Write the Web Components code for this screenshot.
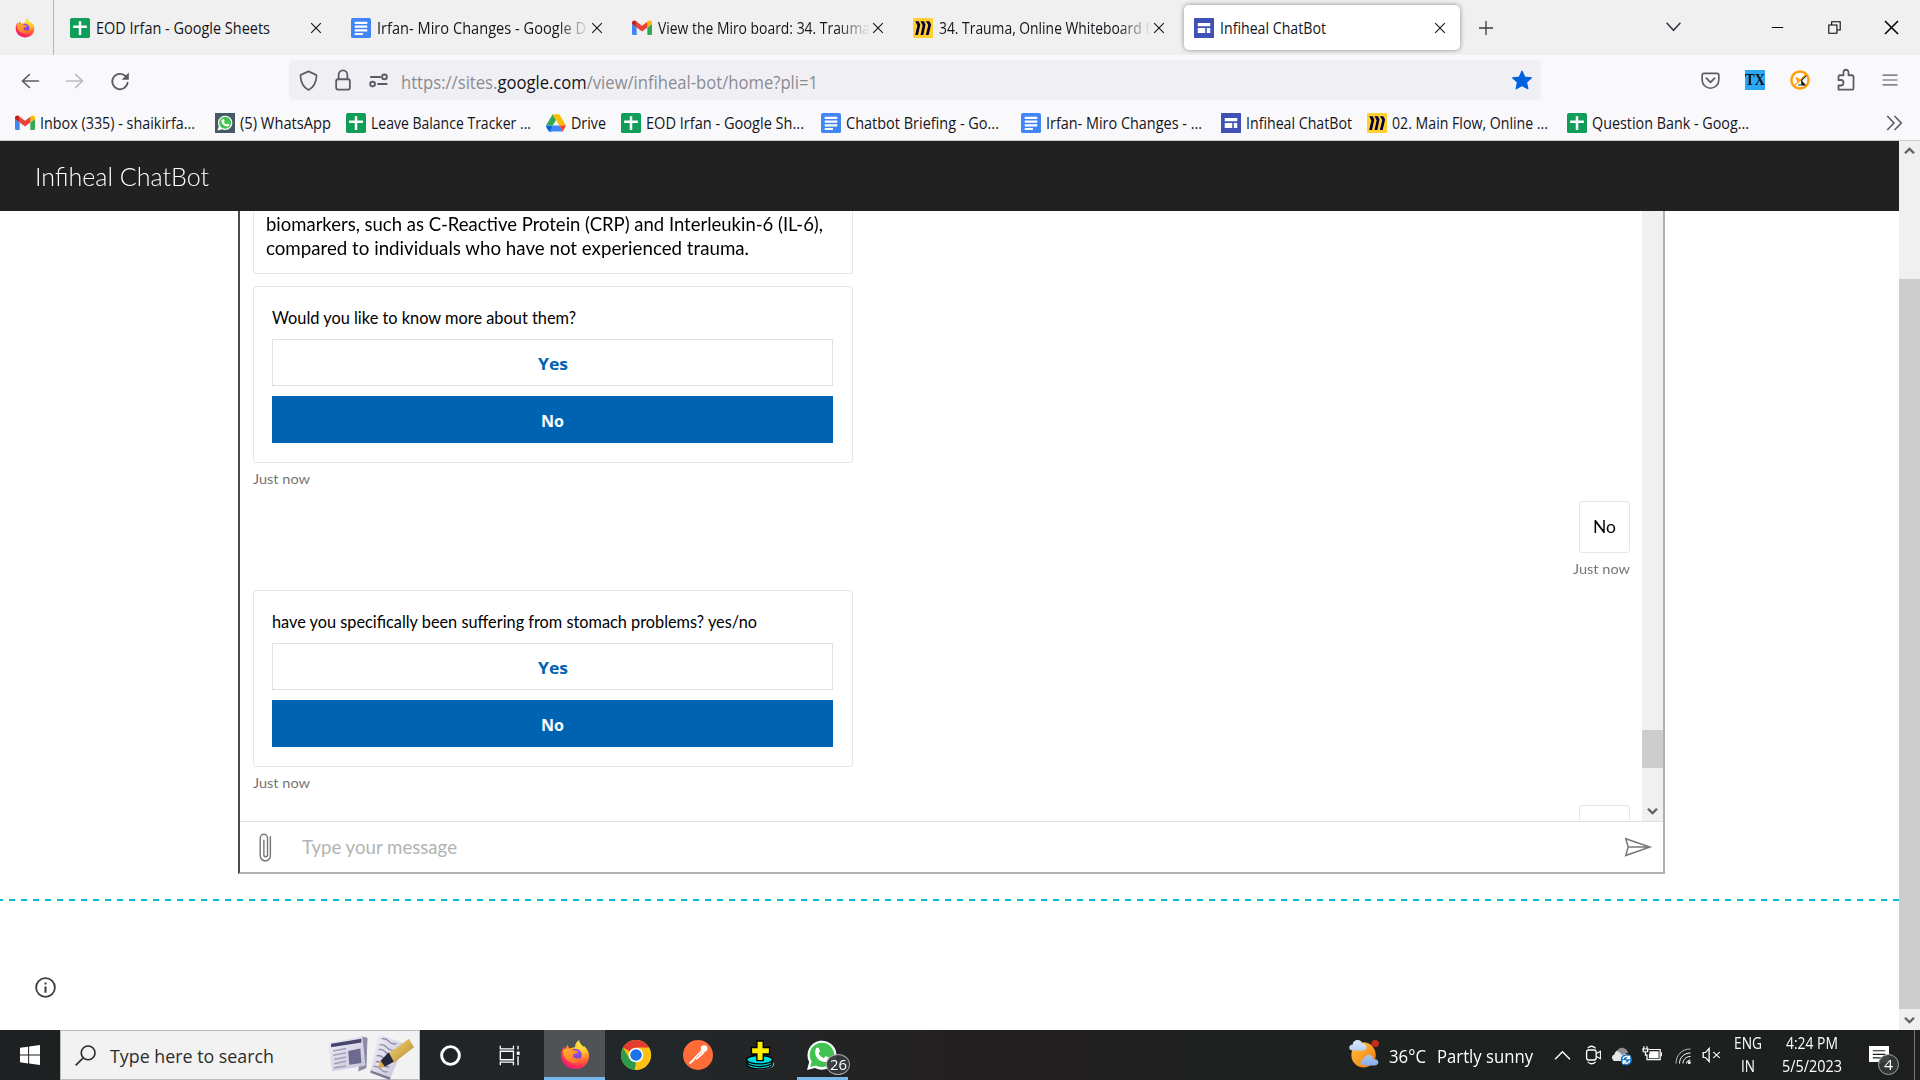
<!DOCTYPE html>
<html lang="en">
<head>
<meta charset="utf-8">
<title>Infiheal ChatBot</title>
<style>
html,body{margin:0;height:100%;overflow:hidden;background:#fff}
body{font-family:"Open Sans","Noto Sans",sans-serif;color:#15141a}
</style>
</head>
<body>
<desktop-screen></desktop-screen>
<script>
const ICONS = {
firefox:`<defs><radialGradient id="a" cx=".75" cy=".1" r="1"><stop offset="0" stop-color="#fff44f"/><stop offset=".35" stop-color="#ffc02a"/><stop offset=".6" stop-color="#ff6a33"/><stop offset=".85" stop-color="#ff2b55"/><stop offset="1" stop-color="#e31587"/></radialGradient><radialGradient id="b" cx=".6" cy=".3" r=".8"><stop offset="0" stop-color="#a05af0"/><stop offset="1" stop-color="#5b2fc4"/></radialGradient><linearGradient id="c" x1="0" y1="0" x2="1" y2="1"><stop offset="0" stop-color="#ffb62c"/><stop offset="1" stop-color="#ff6333"/></linearGradient></defs><path fill="url(#a)" d="M16 31C7.500 31 1 24.500 1 16.500 1 12.500 2.800 9 4.500 7L5 10 8 5 10 9 16 7.500C16 4 18 1.500 20.500 0 20.500 3 22 4.500 24 6 25 7 25.500 8 25.500 6.500 29 9 31 13 31 17 31 25 24.500 31 16 31Z"/><circle cx="16.300" cy="16" r="6.800" fill="url(#b)"/><path fill="url(#c)" d="M3 11C6 8 12 9 14.500 11L19.500 12C19 14 16 14.500 15 15 13 16.500 14 19 16.500 19.500 19 20 21 19 23 20 21 24 17 25.500 12 24 6 22 3 17 3 11Z"/>`,
sheets:`<rect x="0" y="0" width="32" height="32" rx="3" fill="#0f9d58"/><path fill="#fff" d="M14 5h4v7h9v4h-9v11h-4V16H5v-4h9z"/>`,
docs:`<rect width="32" height="32" rx="3" fill="#4285f4"/><path fill="#fff" d="M6 6h20v3.500H6zM6 12h20v3.500H6zM6 18h20v3.500H6zM6 24h13v3H6z"/>`,
sites:`<rect width="32" height="32" rx="1" fill="#3f51b5"/><path fill="#fff" d="M6 8h20v5H6zM6 16h12v8H6zM20.500 16H26v8h-5.500z"/>`,
gmail:`<path fill="#4285f4" d="M2 27h5.500V15L0 9v16a2 2 0 0 0 2 2z"/><path fill="#34a853" d="M24.500 27H30a2 2 0 0 0 2-2V9l-7.500 6z"/><path fill="#fbbc04" d="M24.500 6v9L32 9.500V7.500c0-3-3.500-4.500-5.500-3z"/><path fill="#ea4335" d="M7.500 15V6l8.500 6.500L24.500 6v9L16 21.500z"/><path fill="#c5221f" d="M0 7.500v2L7.500 15V6l-2-1.500C3.500 3 0 4.500 0 7.500z"/>`,
miro:`<rect width="32" height="32" rx="2" fill="#ffd02f"/><path fill="#050038" d="M3.500 5H9l2.700 5.500L8 27H3.500L7 12zM12 5h5.500l2.500 5.500L16.500 27H12l3.500-15.500zM20.500 5H26l3 5.500L25 27h-4.500l4-16z"/>`,
wasq:`<rect width="32" height="32" fill="#455a64"/><path fill="#fff" d="M4 28l2-7A11.500 11.500 0 1 1 11 26z"/><circle cx="16.300" cy="15.500" r="9.600" fill="#41c351"/><path fill="#fff" d="M12 10c1-1 2-1 2.500.5l1 2.200-1.200 2c1 1.800 2.200 2.800 4 3.600l1.700-1.500 3 1.500c0 3-3.500 4-6.500 2.500-3.800-1.800-7-5.500-6-9z"/>`,
wa:`<path fill="#fff" d="M0 32L2.300 23.500A15.500 15.500 0 1 1 8.500 29.800z"/><path fill="#40c351" d="M3.300 28.700L5 23A13 13 0 1 1 9.500 27.200z"/><path fill="#fff" d="M9.500 9c1-1.400 2.600-1.500 3.200 0l1.200 3-1.500 2.500c1.300 2.300 3 3.800 5.500 4.900l2.200-2.300 3.900 2c.3 4-4.600 5.500-8.500 3.600C10.600 20.600 7 15 9.500 9z"/>`,
drive:`<path fill="#0066da" d="M2.500 26l2 3.500h5L10.500 20H0c0 2.500 1 4.500 2.500 6z"/><path fill="#34a853" d="M16 11L10.700 2 0 20h10.700z"/><path fill="#fbbc04" d="M10.700 2h10.600L32 20H21.300z"/><path fill="#4285f4" d="M10.700 20L5.300 29.500h21.400L21.300 20z"/><path fill="#ea4335" d="M21.300 20l5.400 9.500L32 20z"/>`,
x:`<path d="M5 5l22 22M27 5L5 27" stroke="currentColor" stroke-width="2.600" fill="none"/>`,
plus:`<path d="M16 2v28M2 16h28" stroke="currentColor" stroke-width="2.600" fill="none"/>`,
down:`<path d="M3 9l13 14L29 9" stroke="currentColor" stroke-width="3" fill="none"/>`,
up:`<path d="M2 23L16 9l14 14" stroke="currentColor" stroke-width="2.600" fill="none"/>`,
sdown:`<path d="M3 9l13 14L29 9" stroke="currentColor" stroke-width="7" fill="none"/>`,
sup:`<path d="M3 23L16 9l13 14" stroke="currentColor" stroke-width="7" fill="none"/>`,
min:`<path d="M2 16h28" stroke="currentColor" stroke-width="2.600"/>`,
restore:`<path d="M2 10h20v20H2zM9 10V2h21v20h-8" stroke="currentColor" stroke-width="2.600" fill="none"/>`,
back:`<path d="M31 16H3M15 3L2.500 16 15 29" stroke="currentColor" stroke-width="3" fill="none" stroke-linejoin="round" stroke-linecap="round"/>`,
fwd:`<path d="M1 16h28M17 3l12.500 13L17 29" stroke="currentColor" stroke-width="3" fill="none" stroke-linejoin="round" stroke-linecap="round"/>`,
reload:`<path d="M28 18A13 13 0 1 1 25 7.500" stroke="currentColor" stroke-width="3" fill="none" stroke-linecap="round"/><path fill="currentColor" d="M30 1v11a1 1 0 0 1-1 1H18z"/>`,
shield:`<path d="M16 2L28 7c1 0 1.500 1 1.500 2C29 18 26 26 16 30.500 6 26 3 18 2.500 9c0-1 .5-2 1.500-2z" stroke="currentColor" stroke-width="2.800" fill="none" stroke-linejoin="round"/>`,
lock:`<rect x="5" y="15" width="22" height="15" rx="3" stroke="currentColor" stroke-width="2.800" fill="none"/><path d="M9 15V9a7 7 0 0 1 14 0v6" stroke="currentColor" stroke-width="2.800" fill="none"/>`,
perm:`<g stroke="currentColor" stroke-width="3.200" fill="none"><path d="M2 10h18M14 22h17"/><circle cx="26" cy="10" r="4"/><circle cx="6" cy="22" r="4"/></g>`,
star:`<path fill="currentColor" stroke="currentColor" stroke-width="2" stroke-linejoin="round" d="M16 2l4.300 9.300L31 12.500l-7.900 7 2.200 10.500L16 24.700 6.700 30l2.200-10.500L1 12.500l10.700-1.200z"/>`,
pocket:`<path d="M5 4h22a3 3 0 0 1 3 3v8a14 14 0 0 1-28 0V7a3 3 0 0 1 3-3z" stroke="currentColor" stroke-width="2.800" fill="none"/><path d="M9 12l7 7 7-7" stroke="currentColor" stroke-width="3" fill="none" stroke-linecap="round" stroke-linejoin="round"/>`,
nox:`<circle cx="16" cy="16" r="13.700" stroke="#ff9f0a" stroke-width="4" fill="#fff"/><path d="M8 12h5l3.500 4.500L13 21z" fill="#ff9f0a"/><path d="M25 8L7 25" stroke="#ff9f0a" stroke-width="2"/><path d="M26 9l-8 8 6 7H13" stroke="#222" stroke-width="1.700" fill="none"/><path d="M18 17l6 7h-6z" fill="#111"/>`,
puzzle:`<path d="M4 30h22a2 2 0 0 0 2-2V11a2 2 0 0 0-2-2h-6V5a4 4 0 0 0-8 0v4H6a2 2 0 0 0-2 2v5h4a4 4 0 0 1 0 8H4z" stroke="currentColor" stroke-width="2.800" fill="none" stroke-linejoin="round"/>`,
menu:`<path d="M1 5h30M1 16h30M1 27h30" stroke="currentColor" stroke-width="2.600"/>`,
more:`<path d="M4 2l12 14L4 30M17 2l12 14-12 14" stroke="currentColor" stroke-width="2.800" fill="none"/>`,
info:`<circle cx="16" cy="16" r="14.300" stroke="currentColor" stroke-width="2.800" fill="none"/><path d="M14.400 14.500h3.200V24h-3.200zM14.400 8.300h3.200v3.200h-3.200z" fill="currentColor"/>`,
win:`<path fill="#fff" d="M0 4.500L13 2.600v12.700H0zM14.600 2.400L32 0v15.300H14.600zM0 16.800h13v12.600L0 27.500zM14.600 16.800H32V32l-17.400-2.400z"/>`,
search:`<circle cx="20" cy="12" r="10.500" stroke="currentColor" stroke-width="2.500" fill="none"/><path d="M12.500 19.500L1 31" stroke="currentColor" stroke-width="2.500"/>`,
ring:`<circle cx="16" cy="16" r="13.500" stroke="#fff" stroke-width="4.500" fill="none"/>`,
task:`<path d="M2 1v5h20V1M2 31v-5h20v5M2 9.500h20v13H2zM29 1v6M29 17v14" stroke="#fff" stroke-width="2" fill="none"/><path d="M27 10h4.500v5H27z" fill="#fff"/>`,
chrome:`<circle cx="16" cy="16" r="16" fill="#fbc116"/><path fill="#e33b2e" d="M16 16L2.100 8A16 16 0 0 1 29.900 8z"/><path fill="#2c9c4b" d="M2.100 8L9.100 20 16 24l-1.500 7.900A16 16 0 0 1 2.100 8z"/><path fill="#fbc116" d="M16 8h13.900A16 16 0 0 1 14.700 32l8.200-12z"/><circle cx="16" cy="16" r="7.800" fill="#fff"/><circle cx="16" cy="16" r="6.200" fill="#1a73e8"/>`,
postman:`<circle cx="16" cy="16" r="16" fill="#ff6c37"/><circle cx="22.500" cy="9" r="3.500" fill="#fff"/><path d="M19.500 12L12 19.500l3 .5 7-6.500z" fill="#fff" stroke="#fff" stroke-width="1.500"/><path d="M12 20.500l-5 4.500M17 15l-3 5" stroke="#fff" stroke-width="2"/><path d="M20 13l-6.500 6.500" stroke="#ff6c37" stroke-width=".8"/>`,
plusdisk:`<ellipse cx="17" cy="26" rx="14" ry="5.500" fill="#aaa"/><g fill="#00dbe0" stroke="#000" stroke-width="1.400"><ellipse cx="15" cy="26" rx="14" ry="4.800"/><ellipse cx="15" cy="23.500" rx="14" ry="4.800"/><ellipse cx="15" cy="21" rx="14.300" ry="4.500"/></g><path d="M12 1h7v7h7v7h-7v7h-7v-7H6V8h6z" fill="#ffed00" stroke="#000" stroke-width="1.500"/>`,
clip:`<path d="M28 9v44a12 12 0 0 1-25 0V12a9 9 0 0 1 18 0v39a4.500 4.500 0 0 1-9 0V17" stroke="currentColor" stroke-width="3.500" fill="none" stroke-linecap="round"/>`,
send:`<path d="M1.500 1.500L50 19 1.500 37l5-18zM6.500 19H50" stroke="currentColor" stroke-width="3" fill="none" stroke-linejoin="miter"/>`,
weather:`<defs><linearGradient id="s" x2="1" y2="1"><stop stop-color="#ffc440"/><stop offset="1" stop-color="#f4780c"/></linearGradient><linearGradient id="w" x2="0" y2="1"><stop stop-color="#dbe8fb"/><stop offset="1" stop-color="#88ade9"/></linearGradient></defs><ellipse cx="15.500" cy="17" rx="13" ry="14.500" fill="url(#s)"/><circle cx="28" cy="4" r="4" fill="#c42b1c"/><path fill="url(#w)" d="M4 12C-1 12-1 5 4 5 4-1 13-2 14 4c6-1 6 8 1 8zM17 29c-6 0-6-7-1-7 1-7 9-7 10 0 7-1 7 7 1 7z"/>`,
cam:`<rect x="3" y="8" width="18" height="16" rx="3.500" stroke="#fff" stroke-width="2.500" fill="none"/><path d="M21 14l8-4v12l-8-4M5 5q7-6 15 0M5 27q7 6 15 0" stroke="#fff" stroke-width="2" fill="none"/>`,
cloud:`<path d="M3 24a6 6 0 0 1 1-11c2-9 14-9 18 0 8 0 9 7 6 11z" fill="#e6e6e6"/><path d="M8 8C12-1 25 2 26 12c-5-2-8 1-9 4-2-4-5-6-9-8z" fill="#8d8d8d"/><circle cx="23" cy="22" r="9" fill="#1474c4"/><path d="M17.500 21a5.500 5.500 0 0 1 10-2M28.500 23a5.500 5.500 0 0 1-10 2M28 15v5h-5M18 29v-5h5" stroke="#fff" stroke-width="2.200" fill="none"/>`,
battery:`<path d="M11 8h18v18H8v-9" stroke="#fff" stroke-width="2" fill="none"/><path fill="#fff" d="M12 11h14.500v12.500H11V16h1zM30 13h2v7h-2z"/><path d="M3 2v4M8 2v4M0 7h11M2 7v5h7V7M5.500 12v6H8" stroke="#fff" stroke-width="2" fill="none"/>`,
wifi:`<g stroke="#fff" stroke-width="2" fill="none"><path d="M2 31C2 14 14 2 31 2" opacity=".7"/><path d="M9 31c0-12 9-21 22-21M16 31c0-8 6-14 15-14M23 31c0-4 3-7 8-7"/></g><circle cx="28.500" cy="29" r="3" fill="#fff"/>`,
mute:`<path d="M2 11h4l6-8v26l-6-8H2zM19 10l11 12M30 10L19 22" stroke="#fff" stroke-width="2.200" fill="none"/>`,
note:`<path fill="#fff" d="M0 0h32v27h-9l-7 5v-5H0z"/><path d="M6 8h20M6 14h20M6 20h13" stroke="#1d2122" stroke-width="2"/>`,
news:`<defs><linearGradient id="n" x2="1" y2="1"><stop stop-color="#f1eff8"/><stop offset="1" stop-color="#c6c3d6"/></linearGradient><linearGradient id="g" x2="1" y2="1"><stop stop-color="#f7da7c"/><stop offset="1" stop-color="#b5862a"/></linearGradient></defs><path d="M33 2l6 1-1 25-8 3z" fill="#8d88a3"/><path d="M0 7L34 2l3 24L4 31z" fill="url(#n)"/><path d="M3 8l30-4v3L3 11z" fill="#454669"/><path d="M5 14l13-2M5 17.500l13-2M6 21l12-2M6 24.500l12-2M6 28l12-1.500" stroke="#a29fb8" stroke-width="1.300"/><path d="M20 14l12-2 1 12-12 1.500z" fill="#6c6b8e"/><path d="M50 0l26 8-14 28-20-6z" fill="url(#n)"/><path d="M42 30l20 6-1 2-19-6z" fill="#7e7a96"/><path d="M53 4q4-1 7 2t8 2M51 9q4-1 7 2t10 3M50 13q4-1 7 2t9 3M48 18q4-1 7 2t7 2M47 23q4-1 7 2t7 2M45 27q4-1 7 2t7 2" stroke="#8f8ba6" fill="none" stroke-width="1.100"/><path d="M80 4l5 7-20 13-5-8z" fill="url(#g)"/><path d="M60 15l5 8-9 4-4-5z" fill="#26273a"/><path d="M52 22l4 5-6 1z" fill="#d6a840"/>`
};
const BOX = {clip:"0 0 32 68",send:"0 0 52 38",news:"0 0 85 38"};

/* Base class: clones a template into an open shadow root. */
class Base extends HTMLElement{
  connectedCallback(){
    if(this.shadowRoot) return;
    const t=document.createElement('template');
    t.innerHTML=`<style>:host{display:block;box-sizing:border-box}*{box-sizing:border-box}</style>`+this.render();
    this.attachShadow({mode:'open'}).appendChild(t.content.cloneNode(true));
    this.ready&&this.ready();
  }
  a(n,d=''){return this.getAttribute(n)??d}
}
const def=(n,c)=>customElements.define(n,c);

/* <ui-icon name w h> */
def('ui-icon',class extends Base{render(){
  const n=this.a('name'),w=this.a('w',20),h=this.a('h',w);
  return `<style>:host{flex:none;width:${w}px;height:${h}px}svg{display:block;overflow:visible}</style><svg width="${w}" height="${h}" viewBox="${BOX[n]||'0 0 32 32'}" preserveAspectRatio="none">${ICONS[n]}</svg>`;
}});

/* <fit-text w size dy>: single line condensed or widened to a given width, with an optional baseline shift */
def('fit-text',class extends Base{render(){
  return `<style>:host{flex:none;width:${this.a('w')}px;font-size:${this.a('size',16)}px;line-height:1.4;white-space:nowrap}span{display:inline-block;transform-origin:0 50%}</style><span><slot></slot></span>`;
}ready(){
  const s=this.shadowRoot.querySelector('span'),w=s.getBoundingClientRect().width;
  if(w) s.style.transform=`translateY(${this.a('dy',0)}px) scaleX(${this.a('w')/w})`;
}});

def('browser-tab',class extends Base{render(){
  const act=this.hasAttribute('active');
  return `<style>:host{width:281px;height:55px;padding:5px 4px 5px 1px;flex:none}
  .t{height:45px;display:flex;align-items:center;padding:1px 0 0 10px;border-radius:5px;${act?'background:#fff;box-shadow:0 0 5px rgba(0,0,0,.42);':''}color:#15141a}
  .l{width:212px;margin-left:6px;margin-right:1px;overflow:hidden;flex:none;${this.hasAttribute('fade')?'-webkit-mask-image:linear-gradient(90deg,#000 180px,transparent 212px);mask-image:linear-gradient(90deg,#000 180px,transparent 212px);':''}}</style>
  <div class="t"><ui-icon name="${this.a('icon')}" w="20"></ui-icon><div class="l"><fit-text w="${this.a('tw')}" size="15.500" dy="1"><slot></slot></fit-text></div><ui-icon name="x" w="14" style="margin-top:-1px"></ui-icon></div>`;
}});

def('tab-strip',class extends Base{render(){return `<style>:host{display:flex;height:55px;background:#f0f0f0;align-items:center;color:#3a3944}
 .f{width:54px;height:55px;border-right:1px solid #b5b5b5;display:flex;align-items:center;padding-left:15px;margin-right:5px;flex:none}.sp{flex:1}
 .w{display:flex;color:#000;align-items:center}</style>
 <div class="f"><ui-icon name="firefox" w="20"></ui-icon></div>
 <browser-tab icon="sheets" tw="174">EOD Irfan - Google Sheets</browser-tab>
 <browser-tab icon="docs" tw="209" fade>Irfan- Miro Changes - Google D</browser-tab>
 <browser-tab icon="gmail" tw="212" fade>View the Miro board: 34. Trauma</browser-tab>
 <browser-tab icon="miro" tw="211" fade>34. Trauma, Online Whiteboard f</browser-tab>
 <browser-tab icon="sites" tw="106" active>Infiheal ChatBot</browser-tab>
 <ui-icon name="plus" w="16" style="margin-left:14px"></ui-icon><div class="sp"></div>
 <ui-icon name="down" w="17" style="margin:-2px 89px 0 0"></ui-icon>
 <div class="w"><ui-icon name="min" w="13" style="margin-right:44px"></ui-icon><ui-icon name="restore" w="13" style="margin-right:41px"></ui-icon><ui-icon name="x" w="19" style="margin-right:19px"></ui-icon></div>`}});

def('nav-bar',class extends Base{render(){return `<style>:host{display:flex;height:49px;padding-top:1px;background:#f9f9fb;color:#5b5b66;align-items:flex-start}
 .b{width:289px;display:flex;align-items:center;height:50px;padding-left:21px;gap:27px;flex:none}
 .u{width:1252px;height:40px;margin-top:4px;border-radius:5px;background:#f0f0f4;display:flex;align-items:center;flex:none;padding-left:10px}
 .u fit-text{color:#8b8b92}b{font-weight:400;color:#15141a}.e{flex:1;display:flex;align-items:center;height:48px}
 .tx{width:20px;height:20px;background:#2aa7f7;color:#111;font:bold 17px/19px "Liberation Serif",serif;overflow:hidden}</style>
 <div class="b"><ui-icon name="back" w="18" h="16"></ui-icon><ui-icon name="fwd" w="18" h="16" style="opacity:.4"></ui-icon><ui-icon name="reload" w="19"></ui-icon></div>
 <div class="u"><ui-icon name="shield" w="19" h="21"></ui-icon><ui-icon name="lock" w="20" h="22" style="margin-left:15px"></ui-icon><ui-icon name="perm" w="19" style="margin-left:16px"></ui-icon>
 <fit-text w="417" size="17.500" dy="1.500" style="margin-left:13px">https://sites.<b>google.com</b>/view/infiheal-bot/home?pli=1</fit-text><ui-icon name="star" w="20" style="margin-left:694px;color:#0061e0"></ui-icon></div>
 <div class="e"><ui-icon name="pocket" w="19" style="margin-left:160px"></ui-icon><div class="tx" style="margin-left:25px"><fit-text w="20" size="17" style="line-height:19px">TX</fit-text></div><ui-icon name="nox" w="20" style="margin-left:25px"></ui-icon><ui-icon name="puzzle" w="20" h="22" style="margin-left:26px"></ui-icon><ui-icon name="menu" w="16" h="14" style="margin-left:26px"></ui-icon></div>`}});

def('book-mark',class extends Base{render(){return `<style>:host{display:flex;align-items:center;flex:none;width:${this.a('w')}px;gap:5px;color:#15141a}</style>
 <ui-icon name="${this.a('icon')}" w="20"></ui-icon><fit-text w="${this.a('tw')}" size="15.500" dy=".5"><slot></slot></fit-text>`}});

def('bookmark-bar',class extends Base{render(){return `<style>:host{display:flex;height:37px;padding:2px 0 0 15px;background:#f9f9fb;align-items:center;border-bottom:1px solid #ccc}.sp{flex:1}</style>
 <book-mark icon="gmail" w="200" tw="155">Inbox (335) - shaikirfa...</book-mark>
 <book-mark icon="wasq" w="131" tw="91">(5) WhatsApp</book-mark>
 <book-mark icon="sheets" w="200" tw="160">Leave Balance Tracker ...</book-mark>
 <book-mark icon="drive" w="75" tw="35">Drive</book-mark>
 <book-mark icon="sheets" w="200" tw="158">EOD Irfan - Google Sh...</book-mark>
 <book-mark icon="docs" w="200" tw="153">Chatbot Briefing - Go...</book-mark>
 <book-mark icon="docs" w="200" tw="156">Irfan- Miro Changes - ...</book-mark>
 <book-mark icon="sites" w="146" tw="106">Infiheal ChatBot</book-mark>
 <book-mark icon="miro" w="200" tw="156">02. Main Flow, Online ...</book-mark>
 <book-mark icon="sheets" w="200" tw="157">Question Bank - Goog...</book-mark>
 <div class="sp"></div><ui-icon name="more" w="18" h="16" style="margin-right:17px;color:#5b5b66"></ui-icon>`}});

/* <scroll-track before thumb up> */
def('scroll-track',class extends Base{render(){return `<style>:host{width:21px;height:100%;background:#f0f0f0;display:flex;flex-direction:column;align-items:center;flex:none;color:#606060}
 .a{flex:none;width:21px;display:flex;justify-content:center}.t{width:21px;background:#cdcdcd;height:${this.a('thumb')}px;flex:none}</style>
 <div class="a" style="height:${this.a('before')}px;padding-top:5px">${this.hasAttribute('up')?'<ui-icon name="sup" w="11" h="10"></ui-icon>':''}</div><div class="t"></div>
 <div class="a" style="flex:1;align-items:flex-end;padding-bottom:5px"><ui-icon name="sdown" w="11" h="10"></ui-icon></div>`}});

def('choice-card',class extends Base{render(){return `<style>:host{width:600px;height:177px;border:1px solid #e6e6e6;border-radius:3px;padding:20px 19px 0 18px;color:#000;background:#fff;flex:none;font-family:Lato,sans-serif}
 .q{height:25px;display:flex;align-items:center;margin-bottom:7px}
 .b{height:47px;border:1px solid #e1e1e1;display:flex;justify-content:center;align-items:center;color:#0063b1;font-family:"Open Sans",sans-serif;font-weight:700;padding-top:2px}
 .n{background:#0063b1;border-color:#0063b1;color:#fff;margin-top:10px}</style>
 <div class="q"><fit-text w="${this.a('tw')}" size="16.300" dy="-1"><slot></slot></fit-text></div>
 <div class="b"><fit-text w="30" size="16" dy="1">Yes</fit-text></div><div class="b n"><fit-text w="23" size="16" dy="1">No</fit-text></div>`}});

def('time-stamp',class extends Base{render(){return `<style>:host{font-family:Lato,sans-serif;color:#767676;height:20px;flex:none}</style><fit-text w="57" size="14.300" dy="${this.a('dy',0)}"><slot></slot></fit-text>`}});
def('user-bubble',class extends Base{render(){return `<style>:host{width:51px;height:52px;border:1px solid #e6e6e6;border-radius:3px;align-self:flex-end;flex:none;display:flex;align-items:center;justify-content:center;font-family:Lato,sans-serif;color:#000}</style><fit-text w="23" size="18"><slot></slot></fit-text>`}});

def('chat-box',class extends Base{render(){return `<style>:host{width:1427px;height:663px;margin-left:238px;border:2px solid #b0b0b0;border-left-color:#4c4c4c;border-top:0;display:flex;flex-direction:column;flex:none}
 .m{display:flex;height:610px;overflow:hidden;flex:none}.l{width:1402px;padding:0 12px 0 13px;display:flex;flex-direction:column;overflow:hidden;flex:none}
 .p{width:600px;height:63px;border:1px solid #e6e6e6;border-top:0;border-radius:0 0 3px 3px;padding:1px 0 0 12px;font-family:Lato,sans-serif;color:#000;flex:none;margin-bottom:12px}
 .p fit-text{height:24px;line-height:24px}
 .f{flex:1;border-top:1px solid #e1e1e1;display:flex;align-items:center;font-family:Lato,sans-serif;color:#b3b3b3;padding-left:19px}</style>
 <div class="m"><div class="l">
 <div class="p"><fit-text w="557" size="18.500">biomarkers, such as C-Reactive Protein (CRP) and Interleukin-6 (IL-6),</fit-text><fit-text w="483" size="18.500">compared to individuals who have not experienced trauma.</fit-text></div>
 <choice-card tw="304">Would you like to know more about them?</choice-card>
 <time-stamp dy="-1" style="margin-top:7px">Just now</time-stamp>
 <user-bubble style="margin-top:11px">No</user-bubble>
 <time-stamp style="margin-top:6px;align-self:flex-end">Just now</time-stamp>
 <choice-card tw="485" style="margin-top:11px">have you specifically been suffering from stomach problems? yes/no</choice-card>
 <time-stamp dy="-1" style="margin-top:7px">Just now</time-stamp>
 <user-bubble style="margin-top:11px"></user-bubble>
 </div><scroll-track before="519" thumb="38"></scroll-track></div>
 <div class="f"><ui-icon name="clip" w="13" h="29" style="color:#767676"></ui-icon><fit-text w="155" size="18.500" dy="1" style="margin-left:30px">Type your message</fit-text><ui-icon name="send" w="26" h="18" style="margin-left:1168px;color:#767676"></ui-icon></div>`}});

def('site-page',class extends Base{render(){return `<style>:host{display:flex;height:889px}.c{width:1899px;display:flex;flex-direction:column}
 header{height:70px;background:#212121;color:#fff;font-family:Lato,sans-serif;font-weight:300;padding-left:35px;display:flex;align-items:center;flex:none;padding-top:2px}
 .d{height:2px;margin-top:25px;flex:none;background:repeating-linear-gradient(90deg,#00bcd4 0 6px,#e0f5f8 6px 7px,#fff 7px 12px);background-position:-3px 0}</style>
 <div class="c"><header><fit-text w="174" size="24.500">Infiheal ChatBot</fit-text></header><chat-box></chat-box><div class="d"></div>
 <ui-icon name="info" w="21" style="margin:76px 0 0 35px;color:#3c4043"></ui-icon></div><scroll-track up before="138" thumb="730"></scroll-track>`}});

def('task-bar',class extends Base{render(){return `<style>:host{display:flex;height:50px;background:linear-gradient(90deg,#1d2122,#222729 35%,#241f20 52%,#1d2221 68%,#1c1f1e);align-items:center;color:#fff}
 .c{height:50px;display:flex;align-items:center;justify-content:center;flex:none;position:relative}
 .s{width:360px;height:50px;background:#f2f2f2;border:1px solid #bdbdbd;display:flex;align-items:center;padding-left:14px;color:#2c2c2c;flex:none}
 .k{flex-direction:column}.k fit-text{height:23px;line-height:23px}
 .ul{position:absolute;bottom:0;height:3px;background:#76b9ed}
 .bd{position:absolute;border:1px solid #a5a5a5;border-radius:50%;background:#35383aee;display:flex;align-items:center;justify-content:center}</style>
 <div class="c" style="width:60px"><ui-icon name="win" w="20"></ui-icon></div>
 <div class="s"><ui-icon name="search" w="21"></ui-icon><fit-text w="164" size="18.300" dy="1" style="margin-left:14px">Type here to search</fit-text><ui-icon name="news" w="86" h="46" style="margin:4px 0 0 54px"></ui-icon></div>
 <div class="c" style="width:60px"><ui-icon name="ring" w="21"></ui-icon></div>
 <div class="c" style="width:64px;padding-right:5px"><ui-icon name="task" w="21"></ui-icon></div>
 <div class="c" style="width:61px;background:#4f5355"><ui-icon name="firefox" w="30"></ui-icon><div class="ul" style="left:0;width:61px"></div></div>
 <div class="c" style="width:62px"><ui-icon name="chrome" w="30"></ui-icon></div>
 <div class="c" style="width:62px"><ui-icon name="postman" w="30"></ui-icon></div>
 <div class="c" style="width:62px"><ui-icon name="plusdisk" w="29" h="30"></ui-icon></div>
 <div class="c" style="width:62px"><ui-icon name="wa" w="30"></ui-icon><div class="ul" style="left:6px;width:51px"></div><div class="bd" style="left:35px;top:24px;width:24px;height:21px"><fit-text w="17" size="15">26</fit-text></div></div>
 <div style="flex:1"></div>
 <div class="c" style="width:188px;justify-content:flex-start"><ui-icon name="weather" w="30" h="28" style="margin-top:-2px"></ui-icon><fit-text w="37" size="17.500" style="margin:2px 0 0 10px">36°C</fit-text><fit-text w="96" size="17.500" style="margin:2px 0 0 11px">Partly sunny</fit-text></div>
 <div class="c" style="width:54px;justify-content:flex-start;padding-left:17px"><ui-icon name="up" w="17"></ui-icon></div>
 <div class="c" style="width:145px;justify-content:flex-start;margin-left:-6px"><ui-icon name="cam" w="17" h="20"></ui-icon><ui-icon name="cloud" w="20" style="margin-left:10px;margin-top:2px"></ui-icon><ui-icon name="battery" w="20" h="18" style="margin-left:10px;margin-top:-2px"></ui-icon><ui-icon name="wifi" w="16" style="margin-left:13px;margin-top:1px"></ui-icon><ui-icon name="mute" w="19" h="16" style="margin-left:11px;margin-top:-1px"></ui-icon></div>
 <div class="c k" style="width:34px;margin-left:1px"><fit-text w="28" size="15.500">ENG</fit-text><fit-text w="14" size="15.500">IN</fit-text></div>
 <div class="c k" style="width:94px"><fit-text w="52" size="15.500">4:24 PM</fit-text><fit-text w="60" size="15.500">5/5/2023</fit-text></div>
 <div class="c" style="width:55px;justify-content:flex-start;padding-left:10px"><ui-icon name="note" w="20" h="19"></ui-icon><div class="bd" style="left:19px;top:24px;width:21px;height:21px"><fit-text w="9" size="15">4</fit-text></div></div>
 <div style="width:6px;height:50px;border-left:1px solid #777"></div>`}});

def('desktop-screen',class extends Base{render(){return `<style>:host{width:1920px;height:1080px;display:flex;flex-direction:column;overflow:hidden}:host>*{flex:none}</style><tab-strip></tab-strip><nav-bar></nav-bar><bookmark-bar></bookmark-bar><site-page></site-page><task-bar></task-bar>`}});
</script>
</body>
</html>
